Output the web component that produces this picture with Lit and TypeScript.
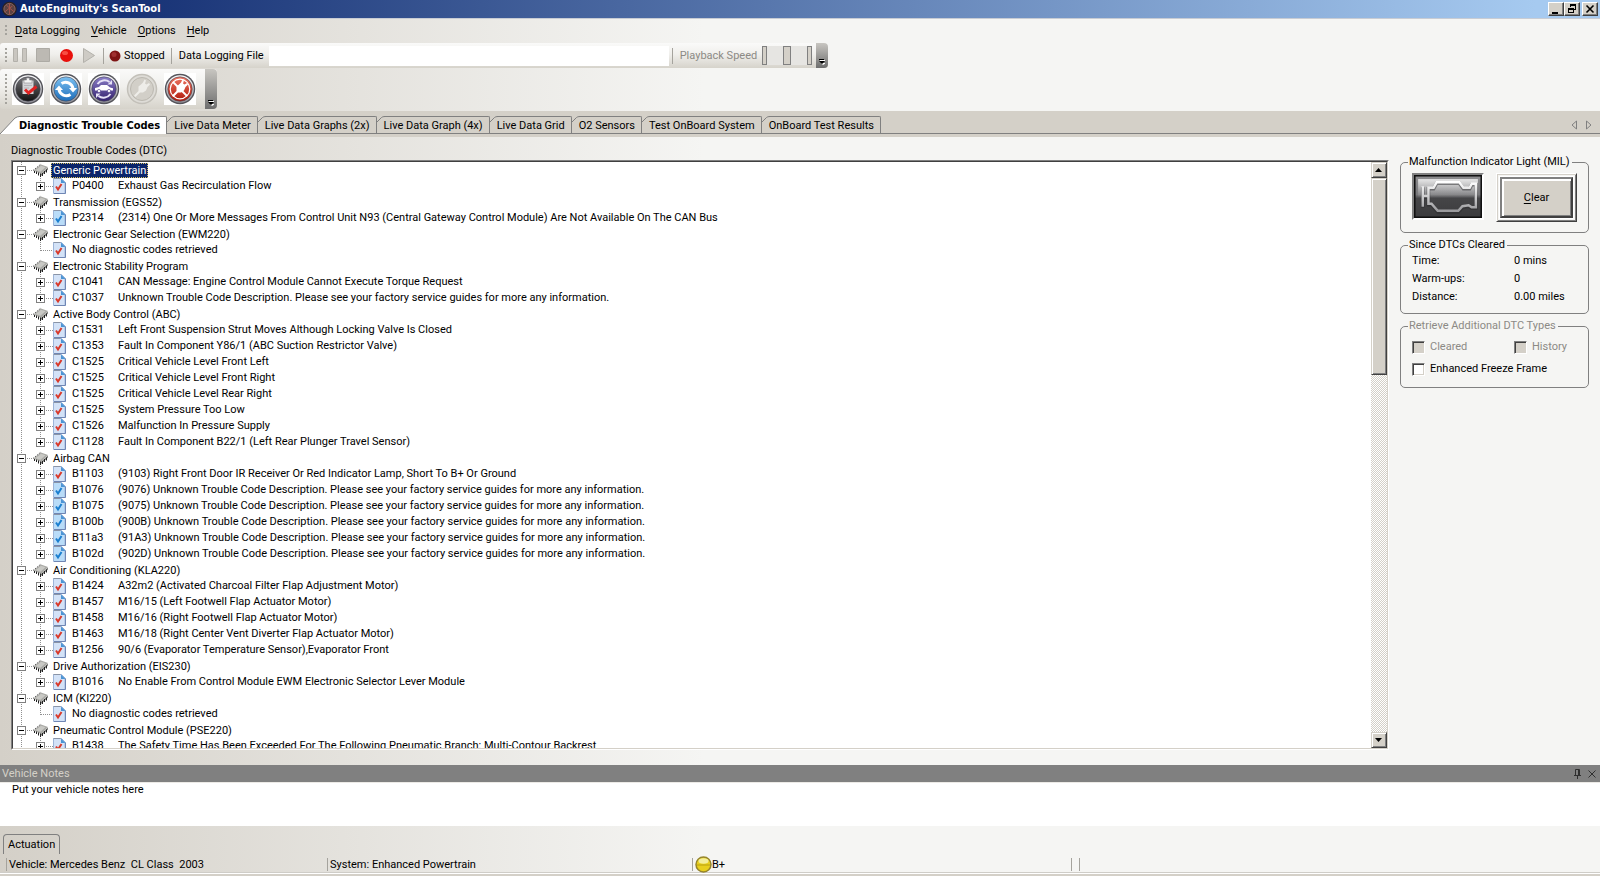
import { LitElement, html, css, svg, nothing } from "lit";
import { customElement, state } from "lit/decorators.js";
import { classMap } from "lit/directives/class-map.js";

type Code = { code?: string; text: string; mark: "red" | "blue" };
type Module = { name: string; codes: Code[] };

const red = (code: string, text: string): Code => ({ code, text, mark: "red" });
const blue = (code: string, text: string): Code => ({ code, text, mark: "blue" });
const none: Code = { text: "No diagnostic codes retrieved", mark: "red" };
const unknown = "Unknown Trouble Code Description. Please see your factory service guides for more any information.";

const modules: Module[] = [
  { name: "Generic Powertrain", codes: [red("P0400", "Exhaust Gas Recirculation Flow")] },
  {
    name: "Transmission (EGS52)",
    codes: [blue("P2314", "(2314) One Or More Messages From Control Unit N93 (Central Gateway Control Module) Are Not Available On The CAN Bus")],
  },
  { name: "Electronic Gear Selection (EWM220)", codes: [none] },
  {
    name: "Electronic Stability Program",
    codes: [red("C1041", "CAN Message: Engine Control Module Cannot Execute Torque Request"), red("C1037", unknown)],
  },
  {
    name: "Active Body Control (ABC)",
    codes: [
      red("C1531", "Left Front Suspension Strut Moves Although Locking Valve Is Closed"),
      red("C1353", "Fault In Component Y86/1 (ABC Suction Restrictor Valve)"),
      red("C1525", "Critical Vehicle Level Front Left"),
      red("C1525", "Critical Vehicle Level Front Right"),
      red("C1525", "Critical Vehicle Level Rear Right"),
      red("C1525", "System Pressure Too Low"),
      red("C1526", "Malfunction In Pressure Supply"),
      red("C1128", "Fault In Component B22/1 (Left Rear Plunger Travel Sensor)"),
    ],
  },
  {
    name: "Airbag CAN",
    codes: [
      red("B1103", "(9103) Right Front Door IR Receiver Or Red Indicator Lamp, Short To B+ Or Ground"),
      blue("B1076", `(9076) ${unknown}`),
      blue("B1075", `(9075) ${unknown}`),
      blue("B100b", `(900B) ${unknown}`),
      blue("B11a3", `(91A3) ${unknown}`),
      blue("B102d", `(902D) ${unknown}`),
    ],
  },
  {
    name: "Air Conditioning (KLA220)",
    codes: [
      red("B1424", "A32m2 (Activated Charcoal Filter Flap Adjustment Motor)"),
      red("B1457", "M16/15 (Left Footwell Flap Actuator Motor)"),
      red("B1458", "M16/16 (Right Footwell Flap Actuator Motor)"),
      red("B1463", "M16/18 (Right Center Vent Diverter Flap Actuator Motor)"),
      red("B1256", "90/6 (Evaporator Temperature Sensor),Evaporator Front"),
    ],
  },
  { name: "Drive Authorization (EIS230)", codes: [red("B1016", "No Enable From Control Module EWM Electronic Selector Lever Module")] },
  { name: "ICM (KI220)", codes: [none] },
  {
    name: "Pneumatic Control Module (PSE220)",
    codes: [red("B1438", "The Safety Time Has Been Exceeded For The Following Pneumatic Branch: Multi-Contour Backrest")],
  },
];

const tabs = [
  "Diagnostic Trouble Codes",
  "Live Data Meter",
  "Live Data Graphs (2x)",
  "Live Data Graph (4x)",
  "Live Data Grid",
  "O2 Sensors",
  "Test OnBoard System",
  "OnBoard Test Results",
];

const chip = html`<svg class="chip" width="17" height="14" viewBox="0 0 17 14" aria-hidden="true">
  <path d="M1.500 7.500 9 1.500 16 4 9 11z" fill="#a9a9a5" />
  <path d="M3.500 7.200 9 2.800 13.500 4.200 8.500 8.800z" fill="#c9c9c5" />
  <path d="M1 7.500 9 1" fill="none" stroke="#222" stroke-dasharray="1 1.500" />
  <path d="M9 11 16 4.500V6.500L9 13z" fill="#777774" />
  <path d="M2.500 8v2M4.500 8.500v2.500M6.500 9.500v3M8.500 10.500V14M10.500 10v3M12.500 8v3M14.500 6.500v3" stroke="#222" />
</svg>`;

const sheet = (mark: "red" | "blue") => html`<svg class="sheet" width="13" height="16" viewBox="0 0 13 16" aria-hidden="true">
  <path d="M.5 .5h8L12 4v11.500H.5z" fill=${mark === "red" ? "#d3e2f7" : "#b9dcf8"} stroke="#9db4d8" />
  <path d="M1 15.500h11.500V4.500" fill="none" stroke="#6f86b4" />
  <path d="M.5 .5h7" stroke="#8a94a6" />
  <path d="M8 .5 12.500 5H8z" fill="#4c94d4" />
  <path d="M3 8.500 5 11.500 8.500 6" fill="none" stroke=${mark === "red" ? "#d93a2b" : "#1b7fd0"} stroke-width="2" />
</svg>`;

const disc = (id: string, from: string, to: string, art: unknown) => html`<svg width="32" height="32" viewBox="0 0 32 32" aria-hidden="true">
  <defs>
    <linearGradient id=${id} x1="0" y1="0" x2="0" y2="1"><stop offset="0" stop-color=${from} /><stop offset="1" stop-color=${to} /></linearGradient>
    <linearGradient id="${id}r" x1="0" y1="0" x2="0" y2="1"><stop offset="0" stop-color="#fff" /><stop offset="1" stop-color="#8e8e96" /></linearGradient>
  </defs>
  <circle cx="16" cy="16" r="15.200" fill="#55555b" />
  <circle cx="16" cy="16" r="13.800" fill="url(#${id}r)" />
  <circle cx="16" cy="16" r="12.200" fill=${`url(#${id})`} stroke="#444450" stroke-width=".6" />
  ${art}
</svg>`;

const clipboardIcon = disc("gk", "#77777b", "#111", svg`
  <path d="M10.500 7.500h11V21h-11z" fill="#d4d4d7" />
  <path d="M14.500 5h3v2H20v3h-8V7h2.500z" fill="#f4f4f4" stroke="#8a8a8e" stroke-width=".6" />
  <path d="M12 12.500h8M12 15h5" stroke="#b4b4b8" />
  <path d="M13 16.500 16.500 20 24.500 13.500" fill="none" stroke="#e02222" stroke-width="3" />`);
const refreshIcon = disc("gb", "#7cc1f2", "#1d6dba", svg`
  <path d="M11.500 10.500a7.500 7.500 0 0 1 11.500 5" fill="none" stroke="#fff" stroke-width="3" />
  <path d="M19 15h8l-4 4.500z" fill="#fff" />
  <path d="M20.500 21.500A7.500 7.500 0 0 1 9 16.500" fill="none" stroke="#fff" stroke-width="3" />
  <path d="M5 17h8l-4-4.500z" fill="#fff" />`);
const carIcon = disc("gp", "#8b7fc8", "#33206e", svg`
  <path d="M9.500 11a8.500 8.500 0 0 1 12-2" fill="none" stroke="#e6e2f6" stroke-width="2" />
  <path d="M19.500 11.500h4.500V7z" fill="#e6e2f6" />
  <path d="M22.500 21a8.500 8.500 0 0 1-12 2" fill="none" stroke="#e6e2f6" stroke-width="2" />
  <path d="M12.500 20.500H8V25z" fill="#e6e2f6" />
  <path d="M7 17.500v-2.500l4-1 2-2h6l3 2.500 3 .8v2.200z" fill="#fff" />
  <circle cx="11" cy="18" r="1.600" fill="#fff" stroke="#4a3a86" stroke-width=".6" />
  <circle cx="21" cy="18" r="1.600" fill="#fff" stroke="#4a3a86" stroke-width=".6" />`);
const plug = "M12.500 13.500 15 11.500 17 9.500 18.500 6.500 20 7.500 19 10.500 20.500 11.500 23 10 24 11.500 21.500 14 20 17.500 17 19.500 14 19.500 9.500 24 8 22.500 12.500 18z";
const connectIcon = html`<svg width="32" height="32" viewBox="0 0 32 32" aria-hidden="true">
  <circle cx="16" cy="16" r="14.500" fill="#dedcd7" stroke="#c3c0b9" stroke-width="1.500" />
  <circle cx="16" cy="16" r="11.500" fill="#d2cfc8" stroke="#bbb8b0" />
  <path d=${plug} fill="#eeede9" />
</svg>`;
const disconnectIcon = disc("gr", "#ee7460", "#b01a0c", svg`
  <path d=${plug} fill="#fff" />
  <path d="M9 9 23 23" stroke="#fff" stroke-width="1.800" />
  <circle cx="16" cy="16" r="9.800" fill="none" stroke="#fff" stroke-width="1.200" />`);

const engineIcon = html`<svg class="engine" viewBox="0 0 66 42" preserveAspectRatio="none" aria-label="Malfunction light off" role="img">
  <defs>
    <linearGradient id="eb" x1="0" y1="0" x2="0" y2="1"><stop offset="0" stop-color="#8c8c8e" /><stop offset=".45" stop-color="#77777a" /><stop offset=".55" stop-color="#454547" /><stop offset="1" stop-color="#3c3c3e" /></linearGradient>
    <linearGradient id="ef" x1="0" y1="0" x2="0" y2="1"><stop offset="0" stop-color="#fff" /><stop offset="1" stop-color="#9b9b9e" /></linearGradient>
    <linearGradient id="eh" x1="0" y1="0" x2="0" y2="1"><stop offset="0" stop-color="#e6e6e6" /><stop offset="1" stop-color="#e6e6e6" stop-opacity="0" /></linearGradient>
  </defs>
  <rect width="66" height="42" fill="#101010" />
  <rect x="1.500" y="1.500" width="63" height="39" fill="url(#eb)" />
  <rect x="4" y="4" width="58" height="18" fill="url(#eh)" />
  <path d="M14 13.500h5l3-5.500h22l4 5.500h6l2-4h4v23h-4l-3-2-6 1-4 4.500H23l-6-7h-3v-15.500zM8.500 12v20M8.500 21.500H14" fill="none" stroke="#2a2a2c" stroke-width="3.500" opacity=".5" />
  <path d="M14 12.500h5l3-5.500h22l4 5.500h6l2-4h4v23h-4l-3-2-6 1-4 4.500H23l-6-7h-3v-15zM8.500 11v20M8.500 20.500H14" fill="none" stroke="url(#ef)" stroke-width="2.400" />
</svg>`;

@customElement("app-root")
export class AppRoot extends LitElement {
  @state() private activeTab = 0;
  @state() private collapsed = new Set<number>();

  static styles = css`
    :host {
      --face: #d4d0c8;
      --shade: linear-gradient(90deg, #d4d0c8, #f5f5f3 44%);
      --bold: "DejaVu Sans Condensed", "DejaVu Sans", sans-serif;
      display: flex;
      flex-direction: column;
      height: 100vh;
      min-height: 480px;
      overflow: hidden;
      background: var(--face);
      color: #000;
      font: 11px/16px Roboto, "Liberation Sans", sans-serif;
      white-space: nowrap;
    }
    *, *::before, *::after { box-sizing: border-box; }
    button, input, textarea { font: inherit; color: inherit; margin: 0; padding: 0; border: 0; border-radius: 0; background: none; }
    svg { display: block; flex: none; }
    u { text-underline-offset: 2px; }

    .title { display: flex; align-items: center; gap: 3px; height: 19px; flex: none; padding: 0 2px; border-bottom: 1px solid #c8ccd4; background: linear-gradient(90deg, #0a246a, #a6caf0 96%); }
    .title h1 { flex: 1; margin: 0; color: #fff; font: bold 11px/16px var(--bold); }
    .caption { display: flex; }
    .caption button { width: 16px; height: 14px; display: grid; place-items: center; background: var(--face); border: 1px solid; border-color: #fff #404040 #404040 #fff; box-shadow: inset -1px -1px #808080; }
    .caption button:last-child { margin-left: 2px; }

    .bars { flex: none; background: var(--shade); }
    .bars::after { content: ""; display: block; height: 2px; }
    .grip { width: 2px; flex: none; align-self: stretch; background: repeating-linear-gradient(#a5a39d 0 2px, transparent 2px 4px); }
    .menu { display: flex; align-items: center; gap: 11px; height: 24px; padding-left: 5px; }
    .menu .grip { margin: 6px -3px 7px 0; }
    .bar { display: flex; width: fit-content; background: linear-gradient(#fafaf9, #f0efec 45%, #d6d3cb); border-radius: 3px; }
    .log { height: 25px; align-items: center; padding-left: 5px; }
    .log .grip { margin: 5px 6px 5px 0; }
    .log .tool { width: 15px; height: 16px; margin-right: 8px; }
    .log .tool.play { margin-right: 6px; }
    .sep { width: 1px; height: 16px; flex: none; background: #a5a39d; }
    .state { display: flex; align-items: center; gap: 3px; margin: 0 6px 0 5px; }
    .log label { margin-left: 7px; }
    .log .file { width: 400px; height: 20px; margin: 0 3px 0 5px; padding: 0 4px; background: #fff; }
    .log .dim { color: #8c8a85; width: 82px; }
    .speed { display: flex; justify-content: space-between; width: 50px; height: 19px; background: #e6e5e2; margin-right: 4px; }
    .speed i { width: 5px; background: var(--face); border: 1px solid #808080; }
    .speed i:nth-child(2) { width: 8px; }
    .more { display: flex; align-items: flex-end; justify-content: center; align-self: stretch; width: 12px; padding-bottom: 3px; background: linear-gradient(#c8c6c1, #6e6e6e); border-radius: 0 4px 4px 0; }
    .big { height: 40px; margin-top: 1px; padding-left: 5px; align-items: center; }
    .big .grip { margin: 5px 5px 5px 0; }
    .big .tool { width: 32px; height: 32px; margin-right: 6px; background: #fff; }
    .big .tool:disabled { background: none; }
    .big .more { margin-left: 3px; }

    .strip { display: flex; align-items: flex-end; flex: none; height: 26px; padding-bottom: 3px; position: relative; }
    .strip::before { content: ""; position: absolute; inset: auto 0 3px 0; height: 1px; background: #808080; }
    .tab { display: flex; height: 18px; flex: none; }
    .tab .slant { margin-right: -1px; }
    .tab .face { border: solid #808080; border-width: 1px 1px 0 0; border-radius: 0 2px 0 0; padding: 0 6px 0 0; line-height: 17px; }
    .tab.on { position: relative; font: bold 11px/17px var(--bold); }
    .tab.on .face { background: #fff; }
    .scroll { display: flex; gap: 9px; margin: 0 8px 4px auto; }

    .main { flex: 1; min-height: 0; display: flex; gap: 11px; padding: 6px 11px 15px 11px; background: var(--shade); }
    .left { flex: 1; min-width: 0; display: flex; flex-direction: column; }
    .left h2 { margin: 0 0 2px; font: inherit; line-height: 15px; }
    .box { flex: 1; min-height: 0; display: flex; background: #fff; border: 1px solid; border-color: #808080 #fff #fff #808080; }
    .well { flex: 1; min-width: 0; display: flex; border: 1px solid; border-color: #404040 var(--face) var(--face) #404040; }
    .tree { flex: 1; min-width: 0; overflow: hidden; padding-left: 4px; }
    .trunk, .line { background: repeating-linear-gradient(#909090 0 1px, transparent 1px 2px) 4px 0 / 1px 100% no-repeat; }
    .node { display: flex; align-items: center; height: 16px; }
    .kid { padding-left: 19px; }
    .cell { flex: none; height: 16px; display: grid; grid-template-columns: 9px 1fr; grid-template-rows: 16px; align-items: center; }
    .head .cell { width: 15px; }
    .kid .cell { width: 17px; }
    .line.end { background-size: 1px 9px; }
    .dots { height: 1px; background: repeating-linear-gradient(90deg, transparent 0 1px, #909090 1px 2px); }
    .none .dots { grid-column: 1 / -1; margin-left: 4px; }
    .pm { width: 9px; height: 9px; background: linear-gradient(#000, #000) 1px 3px / 5px 1px no-repeat, #fff; border: 1px solid #808080; }
    .pm.plus { background: linear-gradient(#000, #000) 1px 3px / 5px 1px no-repeat, linear-gradient(#000, #000) 3px 1px / 1px 5px no-repeat, #fff; }
    .label { margin-left: 2px; padding: 0 2px; line-height: 15px; height: 15px; }
    .label.sel { background: #0a246a; color: #fff; outline: 1px dotted #d8c060; outline-offset: -1px; }
    .code { width: 46px; margin-left: 6px; }
    .wide { margin-left: 6px; }

    .vbar { width: 16px; flex: none; display: flex; flex-direction: column; background: repeating-conic-gradient(#fff 0 25%, #d4d0c8 0 50%) 0 0 / 2px 2px; }
    .vbar button, .thumb { flex: none; background: var(--face); border: 1px solid; border-color: var(--face) #404040 #404040 var(--face); box-shadow: inset 1px 1px #fff, inset -1px -1px #808080; }
    .vbar button { width: 16px; height: 16px; display: grid; place-items: center; }
    .track { flex: 1; min-height: 0; }
    .thumb { height: 35.5%; }

    .side { width: 189px; flex: none; padding-top: 12px; }
    fieldset { margin: 0; min-width: 0; border: 1px solid #808080; border-radius: 5px; padding: 0 11px; }
    legend { margin-left: -4px; padding: 0 2px 0 1px; line-height: 14px; height: 14px; }
    .mil { height: 63px; display: flex; align-items: flex-start; justify-content: space-between; padding-top: 4px; }
    .lamp { width: 72px; height: 47px; border: 2px solid; border-color: #808080 #fff #fff #808080; }
    .engine { width: 100%; height: 100%; }
    .clear { width: 81px; height: 49px; padding: 3px; border: 1px solid; border-color: #fff #404040 #404040 #fff; box-shadow: inset 1px 1px var(--face), inset -1px -1px #808080; }
    .cap { display: block; height: 100%; line-height: 37px; background: var(--face); border: 2px solid; border-color: #808080 #404040 #404040 #808080; outline: 1px solid #fff; box-shadow: inset 1px 1px #fff, inset 2px 2px #fff, inset -1px -1px #808080; }
    .since { margin-top: 5px; height: 76px; }
    dl { display: grid; grid-template-columns: 102px 1fr; grid-auto-rows: 18px; align-items: center; margin: 0; }
    dt, dd { margin: 0; }
    .types { margin-top: 5px; height: 69px; }
    .types legend, .dim { color: #8c8a85; }
    .checks { display: grid; grid-template-columns: 102px 1fr; grid-auto-rows: 22px; align-items: center; padding-top: 3px; }
    .checks label { display: flex; align-items: center; gap: 5px; }
    .checks label:last-child { grid-column: 1 / -1; }
    .checks input { appearance: none; width: 13px; height: 13px; flex: none; background: #fff; border: 1px solid; border-color: #808080 #fff #fff #808080; box-shadow: inset 1px 1px #404040, inset -1px -1px var(--face); }
    .checks input:disabled { background: var(--face); }

    .notes { flex: none; display: flex; flex-direction: column; }
    .notes header { display: flex; align-items: center; gap: 6px; height: 17px; padding: 0 4px 0 2px; background: #808080; color: var(--face); }
    .notes header label { flex: 1; }
    .notes textarea { display: block; height: 44px; padding: 0 12px; border-top: 1px solid #eceae6; background: #fff; resize: none; outline: 0; overflow: hidden; line-height: 14px; }
    .foot { flex: none; background: var(--shade); padding-top: 8px; }
    .act { display: block; height: 20px; margin-left: 3px; padding: 0 4px; border: 1px solid #808080; border-bottom: 0; border-radius: 4px 4px 0 0; }
    .status { display: grid; grid-template-columns: 321fr 365fr 379fr 8fr 521fr; align-items: center; height: 18px; padding: 2px 0 0 6px; }
    .pane { display: flex; align-items: center; height: 13px; line-height: 13px; padding-left: 2px; border-left: 1px solid #a5a39d; }
    .pane pre { margin: 0; font: inherit; }
    .lip { height: 4px; border-top: 1px solid #cfcdc8; background: linear-gradient(#fff 1px, #d4d0c8 1px); }
  `;

  private toggle(i: number) {
    const next = new Set(this.collapsed);
    next.has(i) ? next.delete(i) : next.add(i);
    this.collapsed = next;
  }

  private renderCode(c: Code, last: boolean) {
    return html`<div class="node kid" role="treeitem">
      <span class=${classMap({ cell: true, line: true, end: last, none: !c.code })}>
        ${c.code ? html`<button class="pm plus" aria-label="Expand ${c.code}"></button>` : nothing}<span class="dots"></span>
      </span>
      ${sheet(c.mark)}
      ${c.code ? html`<span class="code">${c.code}</span><span>${c.text}</span>` : html`<span class="wide">${c.text}</span>`}
    </div>`;
  }

  private renderModule(m: Module, i: number) {
    const shut = this.collapsed.has(i);
    return html`<div class="trunk" role="group">
      <div class="node head" role="treeitem" aria-expanded=${!shut}>
        <span class="cell">
          <button class=${classMap({ pm: true, plus: shut })} aria-label="Toggle ${m.name}" @click=${() => this.toggle(i)}></button><span class="dots"></span>
        </span>
        ${chip}<span class=${classMap({ label: true, sel: i === 0 })}>${m.name}</span>
      </div>
      ${shut ? nothing : m.codes.map((c, n) => this.renderCode(c, n === m.codes.length - 1))}
    </div>`;
  }

  private renderTab(name: string, i: number) {
    const on = i === this.activeTab;
    return html`<button class=${classMap({ tab: true, on })} role="tab" aria-selected=${on} @click=${() => (this.activeTab = i)}>
      ${on
        ? html`<svg class="slant" width="20" height="18" viewBox="0 0 20 18"><path d="M0 18 15 2Q17 .5 20 .5V18z" fill="#fff" /><path d="M0 18 15 2Q17 .5 20 .5" fill="none" stroke="#808080" /></svg>`
        : html`<svg class="slant" width="8" height="18" viewBox="0 0 8 18"><path d="M0 6 4.500 1.500Q5.500 .5 8 .5" fill="none" stroke="#808080" /></svg>`}
      <span class="face">${name}</span>
    </button>`;
  }

  private more = html`<button class="more" aria-label="Toolbar options"><svg width="6" height="7" viewBox="0 0 6 7"><path d="M1 2h5v1H1zM2 5h5L4 7z" fill="#fff" /><path d="M0 1h5v1H0zM0 3h6L3 6z" fill="#000" /></svg></button>`;

  render() {
    return html`
      <header class="title">
        <svg width="15" height="16" viewBox="0 0 16 16"><circle cx="8" cy="8" r="7.800" fill="#2b2020" /><circle cx="8" cy="8" r="6" fill="#5c4242" stroke="#8a6864" /><path d="M8 2v12M8 7 3 11M8 7l5 4M5 4l3 3 3-2" stroke="#a8544a" fill="none" /></svg>
        <h1>AutoEnginuity's ScanTool</h1>
        <div class="caption">
          <button aria-label="Minimize"><svg width="10" height="10"><path d="M1 8h6v2H1z" /></svg></button>
          <button aria-label="Restore"><svg width="10" height="10"><path d="M3 0h6v6H7V5h1V2H4v1H3zM1 4h6v5H1zM2 6v2h4V6z" fill-rule="evenodd" /></svg></button>
          <button aria-label="Close"><svg width="10" height="10"><path d="M1.500 1.500 8.500 8.500M8.500 1.500 1.500 8.500" stroke="#000" stroke-width="1.600" /></svg></button>
        </div>
      </header>

      <div class="bars">
        <nav class="menu">
          <span class="grip"></span>
          <button><u>D</u>ata Logging</button><button><u>V</u>ehicle</button><button><u>O</u>ptions</button><button><u>H</u>elp</button>
        </nav>
        <div class="bar log">
          <span class="grip"></span>
          <button class="tool" disabled aria-label="Pause"><svg width="15" height="15"><path d="M.5 .5h4v13h-4zM9.500 .5h4v13h-4z" fill="#c9c6c0" stroke="#b3b1ab" /></svg></button>
          <button class="tool" disabled aria-label="Stop"><svg width="15" height="15"><path d="M.5 .5h13v13H.5z" fill="#bcb9b3" stroke="#adaba5" /></svg></button>
          <button class="tool" aria-label="Record"><svg width="15" height="15"><circle cx="7.500" cy="7.500" r="6.500" fill="#e8100c" /><ellipse cx="6" cy="5" rx="3" ry="2" fill="#ff6a5c" opacity=".7" /></svg></button>
          <button class="tool play" disabled aria-label="Play"><svg width="15" height="15"><path d="M1.500 .5 12.500 7.500 1.500 14.500z" fill="#cecbc5" stroke="#b3b1ab" /></svg></button>
          <span class="sep"></span>
          <span class="state"><svg width="12" height="12"><circle cx="6" cy="6" r="5.500" fill="#7e1414" /><circle cx="5" cy="4.500" r="2.500" fill="#a03030" /></svg>Stopped</span>
          <span class="sep"></span>
          <label for="file">Data Logging File</label><input id="file" class="file" type="text" />
          <span class="sep"></span>
          <label class="dim">Playback Speed</label>
          <span class="speed"><i></i><i></i><i></i></span>
          ${this.more}
        </div>
        <div class="bar big">
          <span class="grip"></span>
          <button class="tool" aria-label="Read codes">${clipboardIcon}</button>
          <button class="tool" aria-label="Refresh">${refreshIcon}</button>
          <button class="tool" aria-label="Vehicle">${carIcon}</button>
          <button class="tool" disabled aria-label="Connect">${connectIcon}</button>
          <button class="tool" aria-label="Disconnect">${disconnectIcon}</button>
          ${this.more}
        </div>
      </div>

      <div class="strip" role="tablist">
        ${tabs.map((t, i) => this.renderTab(t, i))}
        <span class="scroll">
          <svg width="6" height="10"><path d="M5.500 1v8L1 5z" fill="none" stroke="#808080" /></svg>
          <svg width="6" height="10"><path d="M.5 1v8L5 5z" fill="none" stroke="#808080" /></svg>
        </span>
      </div>

      <main class="main">
        <section class="left">
          <h2>Diagnostic Trouble Codes (DTC)</h2>
          <div class="box"><div class="well">
            <div class="tree" role="tree">${modules.map((m, i) => this.renderModule(m, i))}</div>
            <div class="vbar">
              <button aria-label="Scroll up"><svg width="8" height="4"><path d="M0 4h7L3.500 0z" /></svg></button>
              <div class="track"><div class="thumb"></div></div>
              <button aria-label="Scroll down"><svg width="8" height="4"><path d="M0 0h7L3.500 4z" /></svg></button>
            </div>
          </div></div>
        </section>
        <aside class="side">
          <fieldset><legend>Malfunction Indicator Light (MIL)</legend>
            <div class="mil"><div class="lamp">${engineIcon}</div><button class="clear"><span class="cap"><u>C</u>lear</span></button></div>
          </fieldset>
          <fieldset class="since"><legend>Since DTCs Cleared</legend>
            <dl><dt>Time:</dt><dd>0 mins</dd><dt>Warm-ups:</dt><dd>0</dd><dt>Distance:</dt><dd>0.00 miles</dd></dl>
          </fieldset>
          <fieldset class="types"><legend>Retrieve Additional DTC Types</legend>
            <div class="checks">
              <label class="dim"><input type="checkbox" disabled />Cleared</label>
              <label class="dim"><input type="checkbox" disabled />History</label>
              <label><input type="checkbox" />Enhanced Freeze Frame</label>
            </div>
          </fieldset>
        </aside>
      </main>

      <section class="notes">
        <header><label for="notes">Vehicle Notes</label>
          <svg width="8" height="10"><path d="M1.500 6V.5h4V6M4.500 .5V6M0 6.500h7M3.500 7v3" fill="none" stroke="#303030" /></svg>
          <svg width="8" height="8"><path d="M.5 .5l7 7M7.500 .5l-7 7" stroke="#303030" /></svg>
        </header>
        <textarea id="notes" .value=${"Put your vehicle notes here"}></textarea>
      </section>

      <footer class="foot">
        <button class="act">Actuation</button>
        <div class="status">
          <span class="pane"><pre>Vehicle: Mercedes Benz  CL Class  2003</pre></span>
          <span class="pane">System: Enhanced Powertrain</span>
          <span class="pane"><svg width="17" height="17" viewBox="0 0 17 17"><circle cx="8.500" cy="8.500" r="7.500" fill="#e8cf1c" stroke="#96852c" stroke-width="1.500" /><ellipse cx="8.500" cy="5" rx="5" ry="2.800" fill="#f3ee9c" /><path d="M2 9h13" stroke="#b8a010" /></svg>B+</span>
          <span class="pane"></span>
          <span class="pane"></span>
        </div>
        <div class="lip"></div>
      </footer>
    `;
  }
}
